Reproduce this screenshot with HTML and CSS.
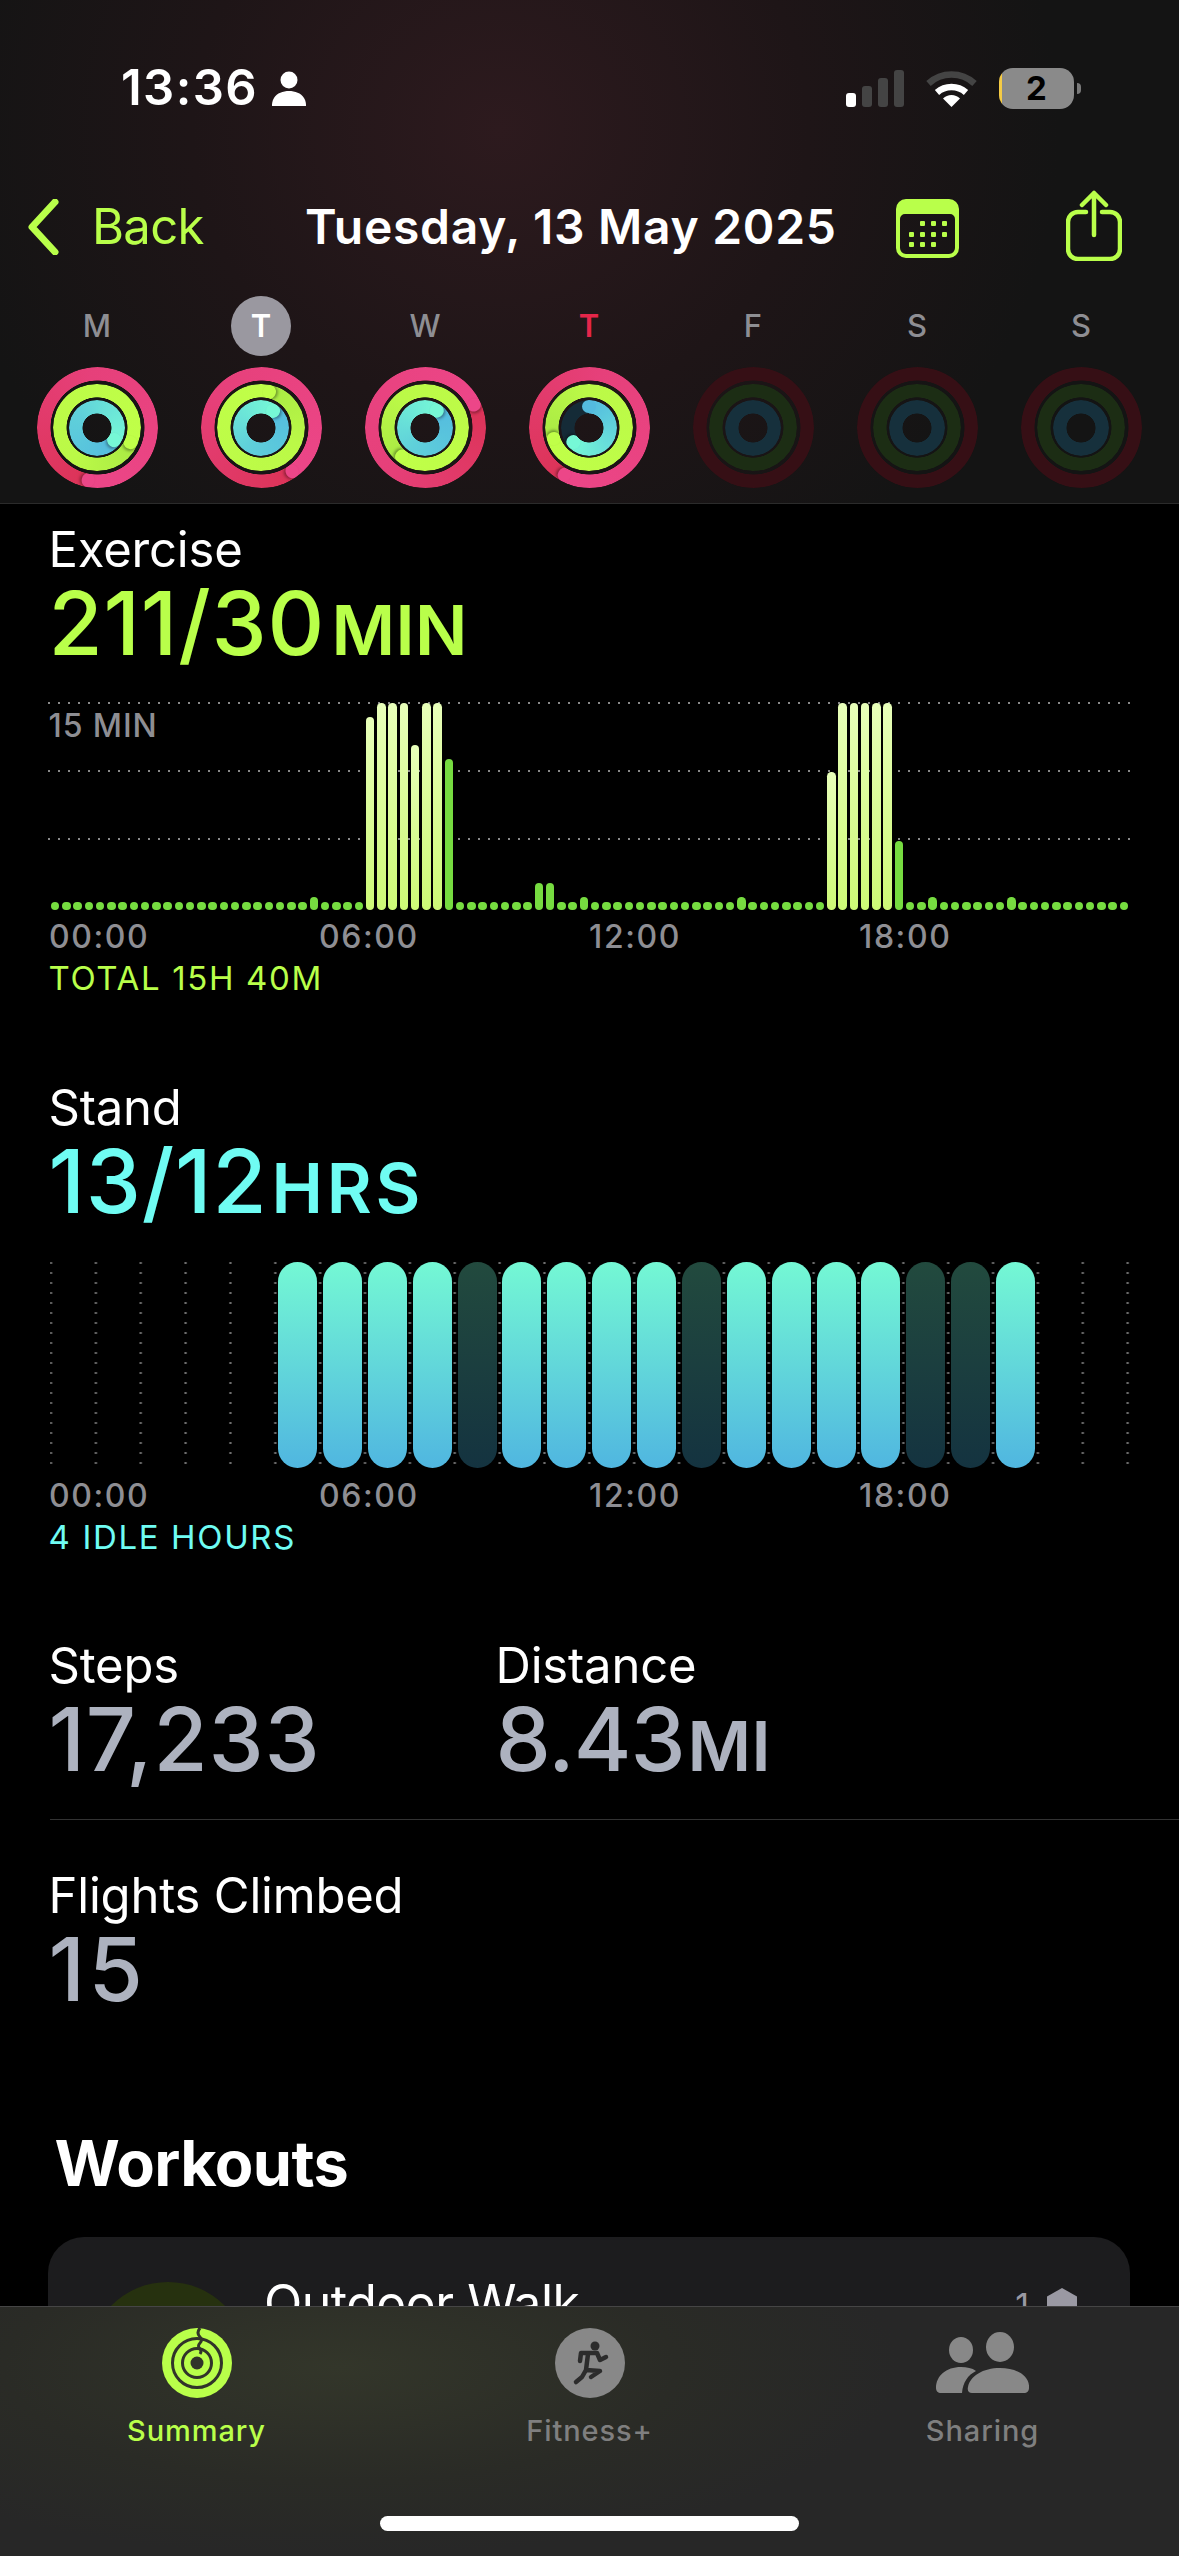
FILE: index.html
```html
<!DOCTYPE html>
<html lang="en">
<head>
<meta charset="utf-8">
<title>Activity Summary</title>
<link rel="stylesheet" href="styles.css">
</head>
<body>
<div class="screen">
  <header class="top">
    <div class="status">
      <div class="status-left">
        <span class="time">13:36</span>
        <svg class="person" viewBox="0 0 34 35"><circle cx="17" cy="9" r="8.5"/><path d="M0 35c0-2 0-5 2-8 3-5 9-7 15-7s12 2 15 7c2 3 2 6 2 8z"/></svg>
      </div>
      <div class="status-right">
        <div class="signal"><i class="on s1"></i><i class="s2"></i><i class="s3"></i><i class="s4"></i></div>
        <svg class="wifi" viewBox="0 0 51 37"><path class="wifi-off" d="M2.5 13.5a34 34 0 0 1 46 0" /><path class="wifi-on" d="M11 22.5a22 22 0 0 1 29 0"/><path class="wifi-tip" d="M17 28.5a12 12 0 0 1 17 0l-8.500 8.500z"/></svg>
        <div class="battery"><span class="battery-body"><span class="battery-num">2</span></span><span class="battery-nub"></span></div>
      </div>
    </div>
    <nav class="nav">
      <svg class="chevron" viewBox="0 0 32 56"><path d="M27 3 4 28l23 25"/></svg>
      <span class="back">Back</span>
      <h1 class="title">Tuesday, 13 May 2025</h1>
      <svg class="calendar" viewBox="0 0 63 59">
        <path class="cal-frame" fill-rule="evenodd" d="M10 0h43a10 10 0 0 1 10 10v39a10 10 0 0 1-10 10H10A10 10 0 0 1 0 49V10A10 10 0 0 1 10 0zm-1 15a5 5 0 0 0-5 5v29a6 6 0 0 0 6 6h43a6 6 0 0 0 6-6V20a5 5 0 0 0-5-5z"/>
        <g class="cal-dots">
          <rect x="24" y="22" width="5" height="5" rx="1"/><rect x="35" y="22" width="5" height="5" rx="1"/><rect x="46" y="22" width="5" height="5" rx="1"/>
          <rect x="13" y="33" width="5" height="5" rx="1"/><rect x="24" y="33" width="5" height="5" rx="1"/><rect x="35" y="33" width="5" height="5" rx="1"/><rect x="46" y="33" width="5" height="5" rx="1"/>
          <rect x="13" y="43" width="5" height="5" rx="1"/><rect x="24" y="43" width="5" height="5" rx="1"/><rect x="35" y="43" width="5" height="5" rx="1"/>
        </g>
      </svg>
      <svg class="share" viewBox="0 0 56 71"><path d="M20 22h-8a10 10 0 0 0-10 10v27a10 10 0 0 0 10 10h32a10 10 0 0 0 10-10V32a10 10 0 0 0-10-10h-8"/><path d="M28 3v42M16 15 28 3l12 12"/></svg>
    </nav>
    <div class="week">
      <div class="day">
        <span class="letter">M</span>
        <div class="ring"><div class="arc red" style="--a:190deg"><b class="head"></b></div><div class="arc green" style="--a:114deg"><b class="head"></b></div><div class="arc cyan" style="--a:125deg"><b class="head"></b></div></div>
      </div>
      <div class="day">
        <span class="letter selected">T</span>
        <div class="ring"><div class="arc red" style="--a:145deg"><b class="head"></b></div><div class="arc green" style="--a:14deg"><b class="head"></b></div><div class="arc cyan" style="--a:35deg"><b class="head"></b></div></div>
      </div>
      <div class="day">
        <span class="letter">W</span>
        <div class="ring"><div class="arc red" style="--a:65deg"><b class="head"></b></div><div class="arc green" style="--a:219deg"><b class="head"></b></div><div class="arc cyan" style="--a:34deg"><b class="head"></b></div></div>
      </div>
      <div class="day">
        <span class="letter today">T</span>
        <div class="ring"><div class="arc red" style="--a:208deg"><b class="head"></b></div><div class="arc green" style="--a:253deg"><b class="head"></b></div><div class="arc cyan partial" style="--a:228deg"><b class="head"></b><b class="head start"></b></div></div>
      </div>
      <div class="day">
        <span class="letter">F</span>
        <div class="ring idle"><div class="arc red"></div><div class="arc green"></div><div class="arc cyan"></div></div>
      </div>
      <div class="day">
        <span class="letter">S</span>
        <div class="ring idle"><div class="arc red"></div><div class="arc green"></div><div class="arc cyan"></div></div>
      </div>
      <div class="day">
        <span class="letter">S</span>
        <div class="ring idle"><div class="arc red"></div><div class="arc green"></div><div class="arc cyan"></div></div>
      </div>
    </div>
  </header>

  <main class="content">
    <section class="metric exercise">
      <h2 class="label">Exercise</h2>
      <p class="value lime"><span class="num">211/30</span><span class="unit">MIN</span></p>
      <div class="ex-chart">
        <div class="ex-grid"></div>
        <span class="ex-scale">15 MIN</span>
        <div class="ex-bars">
          <i></i><i></i><i></i><i></i><i></i><i></i><i></i><i></i><i></i><i></i><i></i><i></i><i></i><i></i><i></i><i></i><i></i><i></i><i></i><i></i><i></i><i></i><i></i>
          <i style="height:13px"></i>
          <i></i><i></i><i></i><i></i>
          <i class="tall" style="height:193px"></i><i class="tall" style="height:207px"></i><i class="tall" style="height:207px"></i><i class="tall" style="height:207px"></i><i class="tall" style="height:165px"></i><i class="tall" style="height:207px"></i><i class="tall" style="height:207px"></i>
          <i style="height:151px"></i>
          <i></i><i></i><i></i><i></i><i></i><i></i><i></i>
          <i style="height:27px"></i><i style="height:27px"></i>
          <i></i><i></i>
          <i style="height:13px"></i>
          <i></i><i></i><i></i><i></i><i></i><i></i><i></i><i></i><i></i><i></i><i></i><i></i><i></i>
          <i style="height:13px"></i>
          <i></i><i></i><i></i><i></i><i></i><i></i><i></i>
          <i class="tall" style="height:138px"></i><i class="tall" style="height:207px"></i><i class="tall" style="height:207px"></i><i class="tall" style="height:207px"></i><i class="tall" style="height:207px"></i><i class="tall" style="height:207px"></i>
          <i style="height:69px"></i>
          <i></i><i></i>
          <i style="height:13px"></i>
          <i></i><i></i><i></i><i></i><i></i><i></i>
          <i style="height:13px"></i>
          <i></i><i></i><i></i><i></i><i></i><i></i><i></i><i></i><i></i><i></i>
        </div>
      </div>
      <div class="axis"><span>00:00</span><span>06:00</span><span>12:00</span><span>18:00</span></div>
      <p class="foot lime">TOTAL 15H 40M</p>
    </section>

    <section class="metric stand">
      <h2 class="label">Stand</h2>
      <p class="value cyan-text"><span class="num">13/12</span><span class="unit wide">HRS</span></p>
      <div class="st-chart">
        <i></i><i></i><i></i><i></i><i class="idle-hour"></i><i></i><i></i><i></i><i></i><i class="idle-hour"></i><i></i><i></i><i></i><i></i><i class="idle-hour"></i><i class="idle-hour"></i><i></i>
      </div>
      <div class="axis"><span>00:00</span><span>06:00</span><span>12:00</span><span>18:00</span></div>
      <p class="foot cyan-text">4 IDLE HOURS</p>
    </section>

    <section class="stats-row">
      <div class="stat steps">
        <h2 class="label">Steps</h2>
        <p class="value grey"><span class="num">17,233</span></p>
      </div>
      <div class="stat">
        <h2 class="label">Distance</h2>
        <p class="value grey"><span class="num narrow">8.43</span><span class="unit tight">MI</span></p>
      </div>
    </section>
    <section class="flights">
      <h2 class="label">Flights Climbed</h2>
      <p class="value grey"><span class="num spread">15</span></p>
    </section>

    <h2 class="workouts">Workouts</h2>
    <article class="card">
      <div class="card-icon"></div>
      <h3 class="card-title">Outdoor Walk</h3>
      <div class="card-count"><span>1</span>
        <svg class="badge" viewBox="0 0 30 34"><path d="M15 0 30 8.500v17L15 34 0 25.500v-17z"/></svg>
      </div>
    </article>
  </main>

  <footer class="tabbar">
    <div class="tabs">
      <div class="tab active">
        <svg class="tab-icon" viewBox="0 0 70 70">
          <circle class="sm-disc" cx="35" cy="35" r="35"/>
          <circle class="sm-line" cx="35" cy="35" r="24.500"/>
          <circle class="sm-line" cx="35" cy="35" r="14.500"/>
          <path class="sm-line" d="M38 0q-4 5 0 9 3 3 0 6-3 3 0 6 2 2 0 5"/>
          <circle class="sm-hole" cx="35" cy="35" r="6.500"/>
        </svg>
        <span class="tab-label">Summary</span>
      </div>
      <div class="tab">
        <svg class="tab-icon" viewBox="0 0 70 70">
          <circle class="fit-disc" cx="35" cy="35" r="35"/>
          <circle class="fit-head" cx="40" cy="18" r="4.500"/>
          <path class="fit-body" d="M25 33l1-8h16l3 7 6-3M33 26l-2 16 14 1-9 6M31 42l-4 7-6 5"/>
        </svg>
        <span class="tab-label">Fitness+</span>
      </div>
      <div class="tab">
        <svg class="tab-icon share-people" viewBox="0 0 93 61">
          <ellipse class="ppl" cx="25" cy="18" rx="12" ry="13"/>
          <ellipse class="ppl" cx="64" cy="15" rx="14" ry="15"/>
          <path class="ppl" d="M0 56c0-12 10-21 25-21 6 0 11 1 15 4-8 4-13 11-14 22H5c-3 0-5-2-5-5z"/>
          <path class="ppl" d="M36 61c-3 0-5-2-4-6 2-11 15-19 32-19s30 8 29 20c0 3-2 5-5 5z"/>
        </svg>
        <span class="tab-label">Sharing</span>
      </div>
    </div>
    <div class="home"></div>
  </footer>
</div>
</body>
</html>
```

FILE: styles.css
```css
* { box-sizing: border-box; margin: 0; padding: 0; }
html, body { background: #000; }
body { font-family: Inter, "Noto Sans", "Liberation Sans", sans-serif; color: #fff; }
.screen { position: relative; width: 1179px; height: 2556px; overflow: hidden; background: #000; }

/* header */
.top {
  height: 504px; padding-top: 63px; border-bottom: 1px solid #2b2b2b;
  background: radial-gradient(ellipse 560px 520px at 500px 130px, #2d1a1e 0%, #1e1517 55%, #141414 100%) #141414;
}
.status { display: flex; justify-content: space-between; align-items: center; height: 50px; padding: 0 98px 0 121px; }
.status-left { display: flex; align-items: center; gap: 14px; }
.time { font-size: 49px; line-height: 50px; font-weight: 600; letter-spacing: 1.400px; }
.person { width: 34px; height: 35px; fill: #fff; }
.status-right { display: flex; align-items: center; gap: 22px; }
.signal { display: flex; align-items: flex-end; gap: 6px; height: 37px; }
.signal i { display: block; width: 10px; border-radius: 3px; background: #444; }
.signal .on { background: #fff; }
.s1 { height: 14px; } .s2 { height: 21px; } .s3 { height: 29px; } .s4 { height: 37px; }
.wifi { width: 51px; height: 37px; fill: none; }
.wifi-off { stroke: #444; stroke-width: 6.500; }
.wifi-on { stroke: #fff; stroke-width: 6.500; }
.wifi-tip { fill: #fff; }
.battery { display: flex; align-items: center; gap: 3px; }
.battery-body {
  display: flex; align-items: center; justify-content: center; width: 75px; height: 41px; border-radius: 14px;
  background: linear-gradient(90deg, #f5cb45 0, #f5cb45 3px, #8a8a8a 3px);
}
.battery-num { color: #000; font-size: 33px; line-height: 41px; font-weight: 700; }
.battery-nub { width: 4px; height: 11px; border-radius: 0 4px 4px 0; background: #7a7a7a; }

.nav { display: flex; align-items: center; height: 74px; margin-top: 77px; padding-left: 28px; }
.chevron { width: 32px; height: 56px; margin-right: 32px; fill: none; stroke: #b9ff4a; stroke-width: 7; stroke-linecap: round; stroke-linejoin: round; flex: none; }
.back { width: 212px; font-size: 49px; line-height: 60px; color: #b9ff4a; letter-spacing: -.7px; }
.title { width: 592px; font-size: 48px; line-height: 60px; font-weight: 600; letter-spacing: .7px; padding-left: 1px; white-space: nowrap; }
.calendar { width: 63px; height: 59px; flex: none; margin-bottom: -2px; }
.cal-frame { fill: #b9ff4a; }
.cal-dots { fill: #b9ff4a; }
.share { width: 56px; height: 71px; margin-left: 107px; margin-bottom: 3px; flex: none; fill: none; stroke: #b9ff4a; stroke-width: 4.500; stroke-linecap: round; stroke-linejoin: round; }

.week { display: grid; grid-template-columns: repeat(7, 164px); margin-top: 32px; padding-left: 15px; }
.day { display: flex; flex-direction: column; align-items: center; }
.letter { width: 60px; height: 60px; border-radius: 50%; font-size: 31px; line-height: 60px; font-weight: 500; text-align: center; color: #8e8e93; }
.letter.selected { background: #9a98a0; color: #fff; font-weight: 600; }
.letter.today { color: #e5264a; font-weight: 600; }

/* activity rings */
.ring { position: relative; width: 121px; height: 121px; margin-top: 11px; }
.arc {
  position: absolute; border-radius: 50%;
  -webkit-mask: radial-gradient(closest-side, transparent calc(100% - 13.800px), #000 calc(100% - 13.200px));
  mask: radial-gradient(closest-side, transparent calc(100% - 13.800px), #000 calc(100% - 13.200px));
}
.arc.red { inset: 0; background: conic-gradient(from var(--a), #dc3357, #e6407a 45%, #ec4688); --cap: #ec4688; }
.arc.green { inset: 16.800px; background: conic-gradient(from var(--a), #a9ea44, #bbf947 28%, #c0ff48); --cap: #c0ff48; }
.arc.cyan { inset: 32.500px; background: conic-gradient(from var(--a), #54bbdf, #5fd0da 50%, #76f8d6); --cap: #76f8d6; }
.arc.cyan.partial { background: conic-gradient(from 0deg, #54bbdf 0deg, #76f8d6 228deg, #152b37 228deg); }
.head { position: absolute; inset: 0; transform: rotate(var(--a)); }
.head::before {
  content: ""; position: absolute; top: 0; left: 50%; width: 13.500px; height: 13.500px; margin-left: -6.750px;
  border-radius: 50%; background: var(--cap); box-shadow: 2px 0 3px rgba(0, 0, 0, .35);
}
.head.start { transform: none; }
.head.start::before { background: #54bbdf; box-shadow: none; }
.idle .arc.red { background: #360f15; }
.idle .arc.green { background: #1c2d14; }
.idle .arc.cyan { background: #16303c; }

/* content */
.content { padding: 18px 49px 0 50px; }
.label { margin-left: -1.500px; font-size: 49px; line-height: 56px; font-weight: 400; letter-spacing: -.2px; white-space: nowrap; }
.value { margin: 1px 0 0 -1.500px; line-height: 88px; height: 88px; white-space: nowrap; }
.num { font-size: 88px; font-weight: 500; letter-spacing: .8px; }
.num.narrow { letter-spacing: -1px; }
.num.spread { letter-spacing: 3.500px; }
.unit { font-size: 69px; font-weight: 600; letter-spacing: .3px; margin-left: 6.500px; }
.unit.wide { margin-left: 4px; letter-spacing: 3.800px; }
.unit.tight { margin-left: 3px; }
.lime { color: #b9ff4a; }
.cyan-text { color: #6ffcf3; }
.grey { color: #adb2bf; }

.ex-chart { position: relative; height: 208px; margin-top: 35px; }
.ex-grid {
  position: absolute; left: -2px; right: -2px; top: 0; height: 138px;
  background: radial-gradient(circle, #8a8a8a 1px, transparent 1.300px) 0 0 / 10px 68px;
  background-position: -4px -33px;
}
.ex-scale { position: absolute; left: -1.500px; top: 4px; font-size: 32px; line-height: 40px; font-weight: 500; color: #8e8e93; letter-spacing: .9px; }
.ex-bars { position: absolute; inset: 0; display: flex; align-items: flex-end; gap: 2.750px; padding-left: .750px; }
.ex-bars i { display: block; flex: none; width: 8.500px; height: 8px; border-radius: 4.250px; background: #76dc40; }
.ex-bars .tall { background: linear-gradient(#e8ffba, #cdf976); }

.axis { display: grid; grid-template-columns: repeat(4, 270px); margin: 7px 0 0 -1px; font-size: 32px; line-height: 40px; font-weight: 500; color: #8e8e93; letter-spacing: 1.600px; }
.foot { margin: 1px 0 0 -1.500px; font-size: 33px; line-height: 40px; letter-spacing: 1.650px; white-space: nowrap; }

.stand { margin-top: 82px; }
.stand .axis { margin-top: 8px; }
.st-chart {
  display: flex; align-items: stretch; gap: 5.860px; height: 206px; margin-top: 37px; padding-left: 228.200px;
  background: radial-gradient(circle, #707070 1px, transparent 1.300px) -21.430px -4px / 44.860px 10px;
}
.st-chart i { display: block; flex: none; width: 39px; border-radius: 19.500px; background: linear-gradient(#74f8d4, #50b6e0); }
.st-chart .idle-hour { background: linear-gradient(#224a3e, #143340); }

.stats-row { display: flex; margin-top: 81px; margin-right: -49px; padding-bottom: 36px; border-bottom: 1px solid #333; }
.stat.steps { width: 447px; }
.flights { margin-top: 48px; }
.workouts { margin: 112px 0 0 4.500px; font-size: 63px; line-height: 76px; font-weight: 700; letter-spacing: -.6px; }

.card { display: flex; align-items: flex-start; height: 220px; margin: 36px 0 0 -2px; padding: 36px 53px 0 40px; border-radius: 36px; background: #1c1c1e; }
.card-icon { flex: none; width: 160px; height: 160px; margin-top: 9px; border-radius: 50%; background: #26310f; }
.card-title { margin-left: 16px; font-size: 50px; line-height: 60px; font-weight: 400; letter-spacing: -.5px; white-space: nowrap; }
.card-count { display: flex; align-items: flex-start; gap: 18px; margin-left: auto; font-size: 34px; line-height: 40px; color: #9a99a3; }
.card-count span { margin-top: 13px; }
.badge { width: 30px; height: 34px; margin-top: 15px; fill: #9a99a3; }

/* tab bar */
.tabbar {
  position: absolute; left: 0; right: 0; bottom: 0; height: 250px; padding-top: 21px; border-top: 1px solid #454545;
  background: radial-gradient(ellipse 560px 190px at 340px 60px, #33362a 0%, #2a2b26 60%, #272727 100%) #272727;
  background-color: #242424;
}
.tabs { display: grid; grid-template-columns: repeat(3, 393px); }
.tab { display: flex; flex-direction: column; align-items: center; }
.tab-icon { width: 70px; height: 70px; flex: none; }
.share-people { width: 93px; height: 61px; margin: 4px 0 5px; }
.tab-label { margin-top: 15px; font-size: 29px; line-height: 36px; font-weight: 500; color: #7f7f7f; letter-spacing: .9px; }
.tab.active .tab-label { color: #b9ff4a; }
.sm-disc { fill: #b9ff4a; }
.sm-line { fill: none; stroke: #31342a; stroke-width: 3; }
.sm-hole { fill: #31342a; }
.fit-disc { fill: #888; }
.fit-head { fill: #2c2c2c; }
.fit-body { fill: none; stroke: #2c2c2c; stroke-width: 4.500; stroke-linecap: round; stroke-linejoin: round; }
.ppl { fill: #888; }
.home { width: 419px; height: 15px; margin: 67px auto 0; border-radius: 8px; background: #fff; }
```
